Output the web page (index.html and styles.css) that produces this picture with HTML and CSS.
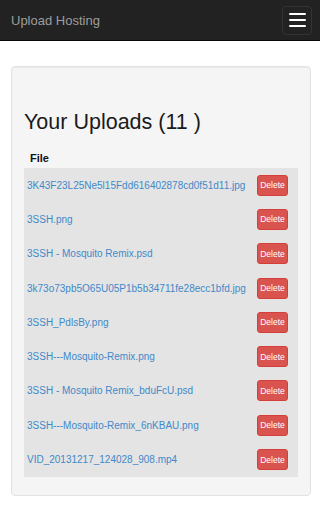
FILE: index.html
```html
<!DOCTYPE html>
<html lang="en">

<head>
    <meta charset="UTF-8">
    <meta name="viewport" content="width=device-width, initial-scale=1.0">
    <title>Upload Hosting</title>
    <link rel="stylesheet" href="styles.css">
</head>

<body>
    <header class="navbar">
        <a class="brand" href="/">Upload Hosting</a>
        <button class="toggle" type="button" aria-label="Toggle navigation">
            <span class="bar"></span>
            <span class="bar"></span>
            <span class="bar"></span>
        </button>
    </header>

    <section class="container">
        <div class="well">
            <h1>Your Uploads (11 )</h1>
            <table class="uploads">
                <thead>
                    <tr>
                        <th>File</th>
                        <th></th>
                    </tr>
                </thead>
                <tbody>
                    <tr>
                        <td><a href="#">3K43F23L25Ne5l15Fdd616402878cd0f51d11.jpg</a></td>
                        <td class="action"><button class="delete-btn">Delete</button></td>
                    </tr>
                    <tr>
                        <td><a href="#">3SSH.png</a></td>
                        <td class="action"><button class="delete-btn">Delete</button></td>
                    </tr>
                    <tr>
                        <td><a href="#">3SSH - Mosquito Remix.psd</a></td>
                        <td class="action"><button class="delete-btn">Delete</button></td>
                    </tr>
                    <tr>
                        <td><a href="#">3k73o73pb5O65U05P1b5b34711fe28ecc1bfd.jpg</a></td>
                        <td class="action"><button class="delete-btn">Delete</button></td>
                    </tr>
                    <tr>
                        <td><a href="#">3SSH_PdlsBy.png</a></td>
                        <td class="action"><button class="delete-btn">Delete</button></td>
                    </tr>
                    <tr>
                        <td><a href="#">3SSH---Mosquito-Remix.png</a></td>
                        <td class="action"><button class="delete-btn">Delete</button></td>
                    </tr>
                    <tr>
                        <td><a href="#">3SSH - Mosquito Remix_bduFcU.psd</a></td>
                        <td class="action"><button class="delete-btn">Delete</button></td>
                    </tr>
                    <tr>
                        <td><a href="#">3SSH---Mosquito-Remix_6nKBAU.png</a></td>
                        <td class="action"><button class="delete-btn">Delete</button></td>
                    </tr>
                    <tr>
                        <td><a href="#">VID_20131217_124028_908.mp4</a></td>
                        <td class="action"><button class="delete-btn">Delete</button></td>
                    </tr>
                </tbody>
            </table>
        </div>
    </section>
</body>

</html>
```

FILE: styles.css
```css
/* General styles */
* {
    margin: 0;
    padding: 0;
    box-sizing: border-box;
}

body {
    font-family: 'Liberation Sans', Arial, sans-serif;
    background-color: #fff;
    color: #333;
}

/* Navbar */
.navbar {
    height: 41px;
    display: flex;
    justify-content: space-between;
    align-items: center;
    padding: 0 8px 0 11px;
    background-color: #222;
    border-bottom: 1px solid #080808;
}

.brand {
    font-size: 13px;
    color: #9d9d9d;
    text-decoration: none;
}

.toggle {
    width: 30px;
    height: 29px;
    display: flex;
    flex-direction: column;
    justify-content: center;
    align-items: center;
    gap: 4px;
    background: transparent;
    border: 1px solid #333;
    border-radius: 4px;
}

.toggle .bar {
    display: block;
    width: 17px;
    height: 2px;
    background-color: #fff;
    border-radius: 1px;
}

/* Uploads */
.container {
    padding: 25px 9px 16px 11px;
}

.well {
    padding: 30px 12px 18px;
    background-color: #f5f5f5;
    border: 1px solid #e3e3e3;
    border-radius: 4px;
    box-shadow: inset 0 1px 1px rgba(0, 0, 0, 0.05);
}

.well h1 {
    font-size: 21.5px;
    font-weight: normal;
    color: #1a1a1a;
    line-height: 23px;
    margin: 14px 0 18px;
}

.uploads {
    width: 100%;
    border-collapse: collapse;
}

.uploads th {
    text-align: left;
    font-size: 11px;
    line-height: 13px;
    font-weight: bold;
    color: #111;
    padding: 0 6px 3px;
}

.uploads tbody {
    background-color: #e4e4e4;
}

.uploads td {
    padding: 0 3px;
    height: 34.3px;
    font-size: 10px;
}

.uploads td a {
    color: #3f89c9;
    text-decoration: none;
}

.uploads td.action {
    text-align: right;
    padding-right: 10px;
}

.delete-btn {
    font-family: inherit;
    font-size: 8.5px;
    line-height: 12px;
    color: #fff;
    background-color: #d9534f;
    border: 1px solid #d43f3a;
    border-radius: 3px;
    padding: 3px 0;
    width: 31px;
    height: 21px;
    cursor: pointer;
}
```
